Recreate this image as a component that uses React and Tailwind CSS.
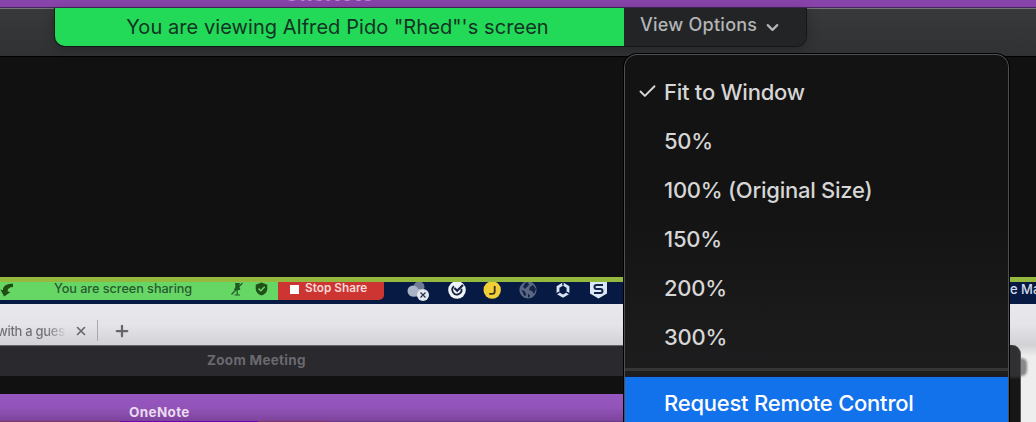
import { Check, ChevronDown, Plus, X } from "lucide-react";

const zoomLevels = ["Fit to Window", "50%", "100% (Original Size)", "150%", "200%", "300%"];

const ArrowIcon = () => (
  <svg className="w-4 h-4 shrink-0" viewBox="0 0 16 16" fill="#214d13">
    <path d="M13 0.8C7 0.8 3 2.5 2.9 7.3L0.3 6.5L4.2 13.5L10.5 9L7.6 8.4C7.6 5.5 9.4 4.2 13 4Z" />
  </svg>
);

const MutedMicIcon = () => (
  <svg className="w-[14px] h-[14px] shrink-0" viewBox="0 0 14 14" fill="none" stroke="#205a24" strokeWidth="1.2">
    <path d="M5 1h5L9 4.5L10.5 8H4L5.5 4.5Z" fill="#205a24" stroke="none" />
    <path d="M7.2 8v5M4.5 13h5.5M1.5 12.5L12.5 1" />
  </svg>
);

const ShieldCheckIcon = () => (
  <svg className="w-[13px] h-[14px] shrink-0" viewBox="0 0 13 14">
    <path d="M6.5 0.5L12.3 2.8V6.5C12.3 10 9.8 12.4 6.5 13.6C3.2 12.4 0.7 10 0.7 6.5V2.8Z" fill="#205018" />
    <path d="M3.6 6.6L5.8 8.8L9.7 4.7" fill="none" stroke="#69d568" strokeWidth="1.5" />
  </svg>
);

// Mac menu bar extras, one drawing per status item
const StatusIcons = () => (
  <svg className="w-[215px] h-[22px] shrink-0" viewBox="400 282 215 22">
    {/* Cloud with x */}
    <circle cx="419" cy="287" r="5.5" fill="#717b94" />
    <circle cx="413" cy="291" r="5.5" fill="#a9b2c7" />
    <rect x="410" y="289" width="12" height="7.5" rx="3.5" fill="#a9b2c7" />
    <circle cx="423" cy="295" r="6" fill="#e2e6ee" />
    <path d="M420.5 292.5l5 5m0-5l-5 5" stroke="#25304b" strokeWidth="1.2" />

    {/* Check circle */}
    <circle cx="457" cy="290" r="8.8" fill="#f1f4fa" />
    <path d="M454 286.3a4.6 4.6 0 1 0 7.4 2.5" fill="none" stroke="#172342" strokeWidth="1.8" />
    <path d="M454.4 288l2.8 2.8L463 285" fill="none" stroke="#172342" strokeWidth="2.2" />

    {/* J badge */}
    <circle cx="492.2" cy="290" r="8.7" fill="#f2cf37" />
    <path d="M494.7 286v5.5q0 2.4-2.5 2.4h-3" fill="none" stroke="#39351f" strokeWidth="1.8" />

    {/* Globe */}
    <circle cx="528" cy="290" r="8.6" fill="#5b6682" />
    <path d="M525 283l3-1 1 3-2 2-2 2-2-2zM530 287l3-2 3 4-2 5-2-3-3-1zM521.5 290l3 1 2 4-2 1zM528 294l2 1-1 3-1-1z" fill="#13244a" />

    {/* Hexagon */}
    <path d="M563 284l5 3v6.2l-5 3-5-3V287z" fill="none" stroke="#d9e5f4" strokeWidth="2.8" />
    <path d="M563 282v3.5M556 294.2l3.5-2M570 294.2l-3.5-2" stroke="#061b43" strokeWidth="1.5" />

    {/* S shield */}
    <path d="M590 281h17v12.5l-8.5 5-8.5-5z" fill="#dce7f5" />
    <path d="M603 285h-6.5q-2 0-2 2t2 2h4q2 0 2 2t-2 2H594" fill="none" stroke="#10234a" strokeWidth="2" />
  </svg>
);

const SharedScreen = () => (
  <div className="w-full">
    <div className="h-[5px] bg-[#94b93e]" />
    <div className="h-[22px] bg-[#061a43] flex items-start overflow-hidden">
      <div className="w-[278px] h-[18px] shrink-0 bg-[#66d765] flex items-center">
        <ArrowIcon />
        <span className="ml-[38px] -mt-1 w-[176px] shrink-0 text-[12.7px] leading-4 font-medium tracking-[-0.05px] text-[#285a30] whitespace-nowrap">
          You are screen sharing
        </span>
        <div className="flex items-center gap-[11px] -mt-1">
          <MutedMicIcon />
          <ShieldCheckIcon />
        </div>
      </div>
      <div className="w-[106px] h-[18px] shrink-0 bg-[#cc3532] rounded-br-[5px] flex items-start pl-3">
        <div className="mt-[3px] w-[9px] h-[9px] bg-white" />
        <span className="ml-[6px] -mt-[2px] text-[11.8px] leading-4 font-semibold text-[#f7d9d7] whitespace-nowrap">
          Stop Share
        </span>
      </div>
      <div className="w-4 shrink-0" />
      <StatusIcons />
      <span className="ml-[395px] -mt-px text-[13px] leading-4 font-medium text-[#d6ddea] whitespace-nowrap">e Ma</span>
    </div>

    {/* Browser tabs */}
    <div className="h-[41px] flex items-center bg-linear-to-b from-[#e9e8ed] via-[#e5e4e9] to-[#d2d2d6] pt-3 text-[#65656a]">
      <span className="-ml-[3px] w-[70px] shrink-0 text-[13px] leading-4 font-medium tracking-[-0.3px] whitespace-nowrap overflow-hidden bg-linear-to-r from-[#707074] from-70% to-[#dddde1] bg-clip-text text-transparent">
        with a gues
      </span>
      <X className="ml-[7px] w-[14px] h-[14px] shrink-0" strokeWidth={2.8} />
      <div className="ml-[9px] w-px h-[21px] bg-[#aaa9ae]" />
      <Plus className="ml-[15px] w-[18px] h-[18px] shrink-0" strokeWidth={3} />
    </div>

    <div className="h-[31px] bg-[#29292e] border-t border-[#656568] pl-[207px]">
      <span className="block text-[13.5px] leading-[29px] font-bold tracking-[0.3px] text-[#6a6a6e]">Zoom Meeting</span>
    </div>
    <div className="h-[18px] bg-[#121111]" />
    <div className="h-[27px] bg-linear-to-b from-[#9657c0] via-[#9254b9] to-[#7d449c] pl-[129px]">
      <span className="block pt-[9px] text-[13.5px] leading-[18px] font-bold tracking-[0.35px] text-[#e9daf0]">OneNote</span>
    </div>
    {/* Top edge of the OneNote toolbar */}
    <div className="h-px flex">
      <div className="w-[120px] bg-[#7b3568]" />
      <div className="w-[138px] bg-[#7100b0]" />
      <div className="w-[70px] bg-[#7b3568]" />
      <div className="flex-1 bg-[#69398a]" />
    </div>
  </div>
);

const ShareBanner = () => (
  <div className="absolute left-[54px] top-2 w-[753px] h-[39px] flex rounded-b-[11px] border border-t-0 border-[#141717] overflow-hidden shadow-[0_2px_12px_rgba(0,0,0,0.25)]">
    <div className="w-[569px] shrink-0 bg-[#23d958] text-center pr-1">
      <span className="text-[20px] leading-[38px] tracking-[0.07px] text-[#123323] whitespace-nowrap">
        You are viewing Alfred Pido "Rhed"'s screen
      </span>
    </div>
    <button className="flex-1 bg-[#222426] flex items-center pl-4 pb-1 text-[#b4b5b7]">
      <span className="text-[18px] leading-6 font-medium tracking-[0.25px] whitespace-nowrap">View Options</span>
      <ChevronDown className="ml-[6px] mt-1 w-[19px] h-[19px]" strokeWidth={2.8} />
    </button>
  </div>
);

const ViewMenu = () => (
  <div className="absolute left-[623px] top-[53px] w-[387px] h-[369px] rounded-t-[14px] border border-b-0 border-black overflow-hidden">
    <div className="h-full rounded-t-[13px] border border-b-0 border-[#505050] bg-linear-to-b from-[#131313] from-40% to-[#202022] pt-[12px] flex flex-col">
      {zoomLevels.map((label, i) => (
        <div key={label} className="h-[49px] shrink-0 flex items-center pl-[12px] text-[#d6d6d6]">
          <div className="w-[27px] shrink-0">
            {i === 0 && <Check className="w-[21px] h-[21px]" strokeWidth={2.2} />}
          </div>
          <span className="text-[22px] leading-7 font-medium tracking-[-0.25px] whitespace-nowrap">{label}</span>
        </div>
      ))}
      <div className="mt-[7px] h-[3px] shrink-0 bg-[#363637]" />
      <div className="mt-[5px] h-[46px] shrink-0 bg-[#1272eb] border-t border-[#1a1c33] pl-[39px]">
        <span className="block text-[22px] leading-[53px] font-medium tracking-[-0.23px] text-white whitespace-nowrap">Request Remote Control</span>
      </div>
    </div>
  </div>
);

// Corner of the window sitting behind the menu on the right
const BackgroundWindow = () => (
  <div className="absolute left-[1009px] top-[345px] w-[27px] h-[77px] overflow-hidden bg-linear-to-b from-[#d2d2d6] to-[#eeeeef] to-15%">
    <div className="absolute left-[7px] top-[13px] w-[11px] h-[18px] rounded-full bg-[#88888b] blur-[1px]" />
    <div className="absolute left-0 top-0 w-3 h-[77px] rounded-tr-[9px] bg-linear-to-b from-[#303033] from-40% to-[#161617] to-45% border-r border-[#555558]" />
  </div>
);

const App = () => {
  return (
    <div className="relative w-[1036px] h-[422px] overflow-hidden bg-[#111111] font-['Inter','Liberation_Sans',sans-serif]">
      <div className="h-2 bg-[#8944ac] border-b border-[#462658] overflow-hidden pl-[284px]">
        <span className="block -mt-[17px] text-[20px] leading-[22px] font-bold tracking-[0.5px] text-[#b98acc]">OneNote</span>
      </div>
      <div className="h-12 bg-linear-to-b from-[#38393b] to-[#303132] border-t border-[#777779] shadow-[0_1px_0_#000]" />
      <div className="h-[221px]" />
      <SharedScreen />
      <BackgroundWindow />
      <ShareBanner />
      <ViewMenu />
    </div>
  );
};

export default App;
